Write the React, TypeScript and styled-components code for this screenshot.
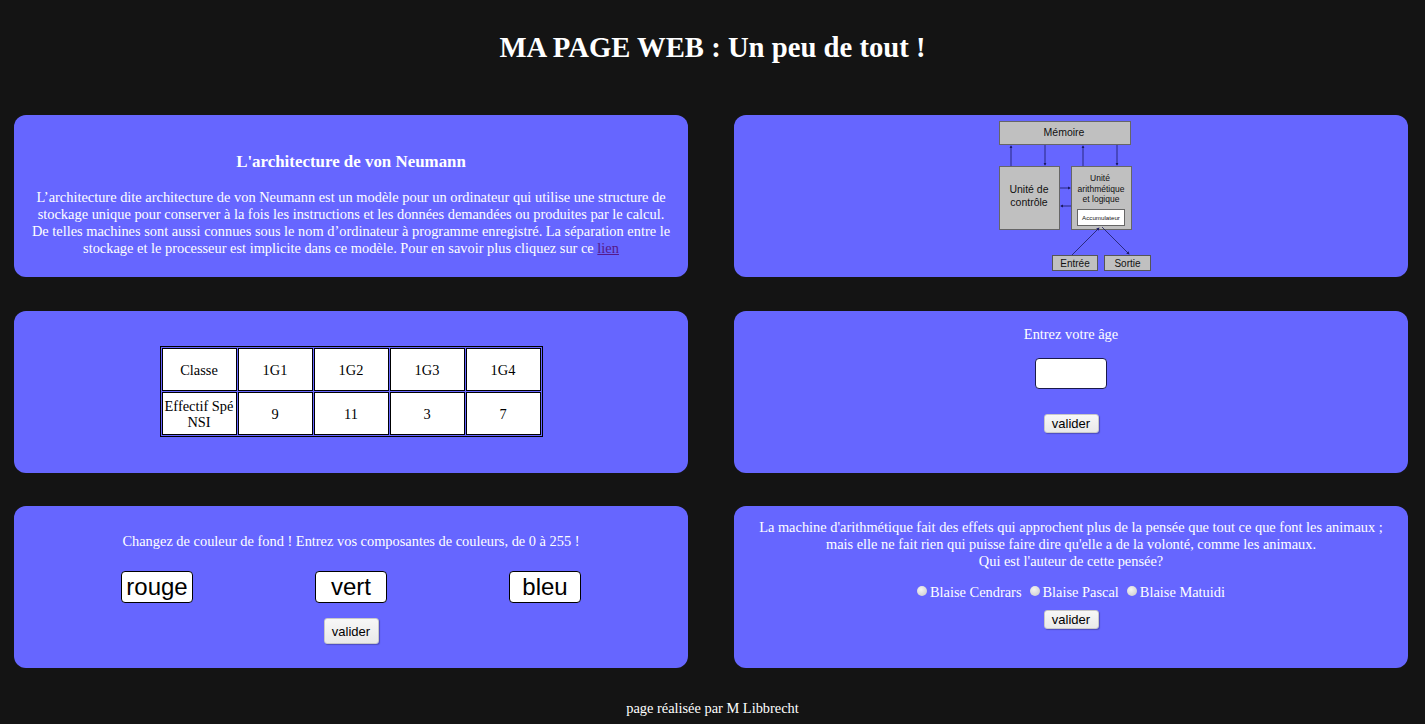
import React from "react";
import styled, { createGlobalStyle } from "styled-components";

const Global = createGlobalStyle`
  html, body { margin: 0; padding: 0; background: #141414; }
  body { font-family: "Liberation Serif", "Times New Roman", serif; color: #fff; }
`;

const Page = styled.div`
  width: 1425px;
  min-height: 724px;
  background: #141414;
`;

const Title = styled.h1`
  margin: 0;
  padding-top: 31px;
  font-size: 28.7px;
  line-height: 32px;
  font-weight: bold;
  text-align: center;
  color: #fff;
`;

const Grid = styled.main`
  display: grid;
  grid-template-columns: 674px 674px;
  grid-template-rows: 162px 162px 162px;
  column-gap: 46px;
  row-gap: 33.5px;
  margin: 52px 0 0 14px;
`;

const Card = styled.section<{ $center?: boolean; $top?: number }>`
  box-sizing: border-box;
  background: #6666ff;
  border-radius: 12px;
  display: flex;
  flex-direction: column;
  align-items: center;
  justify-content: ${(p) => (p.$center ? "center" : "flex-start")};
  padding: ${(p) => (p.$top ?? 0)}px 14px 0;
  text-align: center;
  font-size: 14.4px;
  line-height: 17px;
  color: #fff;
`;

const CardHeading = styled.h3`
  margin: 0 0 18px;
  font-size: 16.9px;
  line-height: 18px;
  font-weight: bold;
`;

const Para = styled.p`
  margin: 0;
`;

const Link = styled.a`
  color: #551a8b;
  text-decoration: underline;
`;

const Table = styled.table`
  border: 1px solid #000;
  border-spacing: 1px;
  background: #6666ff;
  font-size: 14.4px;
  line-height: 16px;
  color: #000;
`;

const Cell = styled.td`
  width: 73px;
  height: 41px;
  padding: 0;
  border: 1px solid #000;
  background: #fff;
  text-align: center;
  vertical-align: middle;
`;

const Label = styled.div<{ $gap?: number }>`
  margin-bottom: ${(p) => p.$gap ?? 0}px;
`;

const AgeInput = styled.input`
  box-sizing: border-box;
  width: 72px;
  height: 31px;
  border: 1px solid #1a1a4a;
  border-radius: 4px;
  background: #fff;
  margin-bottom: 25px;
  outline: none;
`;

const Button = styled.button<{ $tall?: boolean }>`
  box-sizing: border-box;
  width: 55px;
  height: ${(p) => (p.$tall ? 26 : 19)}px;
  padding: 0;
  font-family: Arial, "Liberation Sans", sans-serif;
  font-size: 13px;
  color: #000;
  background: linear-gradient(#f7f7f7, #e9e9e9);
  border: 1px solid #c8c8c8;
  border-radius: 3px;
  box-shadow: 1px 1px 1px rgba(0, 0, 0, 0.25);
`;

const ColorRow = styled.div`
  display: flex;
  justify-content: center;
  gap: 122px;
  margin-bottom: 15px;
`;

const ColorInput = styled.input`
  box-sizing: border-box;
  width: 72px;
  height: 32px;
  padding: 0 1px;
  border: 1px solid #000;
  border-radius: 4px;
  background: #fff;
  font-family: Arial, "Liberation Sans", sans-serif;
  font-size: 24px;
  color: #000;
  text-align: center;
  outline: none;
`;

const Quote = styled.div`
  margin-bottom: 14px;
`;

const RadioRow = styled.div`
  display: flex;
  align-items: center;
  justify-content: center;
  gap: 8px;
  margin-bottom: 9px;
  line-height: 17px;
`;

const RadioLabel = styled.label`
  display: inline-flex;
  align-items: center;
  gap: 3px;
`;

const Radio = styled.input`
  appearance: none;
  width: 10px;
  height: 10px;
  margin: 0;
  border-radius: 50%;
  background: radial-gradient(circle at 40% 35%, #f4f4f4, #c9c9c9);
  border: none;
  transform: translateY(-2px);
`;

const Footer = styled.footer`
  margin-top: 32px;
  text-align: center;
  font-size: 14.4px;
  line-height: 16px;
  color: #fff;
`;

const Arrow = ({ x1, y1, x2, y2 }: { x1: number; y1: number; x2: number; y2: number }) => (
  <line x1={x1} y1={y1} x2={x2} y2={y2} stroke="#1a1a60" strokeWidth={0.8} markerEnd="url(#ah)" />
);

const Diagram = () => (
  <svg width="166" height="156" viewBox="-6 0 166 156">
    <defs>
      <marker id="ah" markerWidth="4" markerHeight="4" refX="3" refY="2" orient="auto">
        <path d="M0,0 L4,2 L0,4 z" fill="#1a1a60" />
      </marker>
    </defs>
    <g fontFamily="Arial, 'Liberation Sans', sans-serif" fill="#111" textAnchor="middle">
      <rect x="5.5" y="3.5" width="131" height="23" fill="#c0c0c0" stroke="#666" />
      <text x="70" y="18" fontSize="10.5">Mémoire</text>
      <rect x="5.5" y="48.5" width="60" height="63" fill="#c0c0c0" stroke="#666" />
      <text x="35" y="75" fontSize="10.5">Unité de</text>
      <text x="35" y="88" fontSize="10.5">contrôle</text>
      <rect x="77.5" y="48.5" width="60" height="63" fill="#c0c0c0" stroke="#666" />
      <text x="106" y="63" fontSize="8.5">Unité</text>
      <text x="107" y="74" fontSize="8.5">arithmétique</text>
      <text x="107" y="84" fontSize="8.5">et logique</text>
      <rect x="83.5" y="91.5" width="47" height="16" fill="#fff" stroke="#666" />
      <text x="107" y="102" fontSize="6.2">Accumulateur</text>
      <rect x="58.5" y="137.5" width="45" height="15" fill="#c0c0c0" stroke="#555" />
      <text x="81" y="148.5" fontSize="10">Entrée</text>
      <rect x="110.5" y="137.5" width="46" height="15" fill="#c0c0c0" stroke="#555" />
      <text x="133.5" y="148.5" fontSize="10">Sortie</text>
    </g>
    <Arrow x1={17} y1={48} x2={17} y2={28} />
    <Arrow x1={51} y1={27} x2={51} y2={47} />
    <Arrow x1={89} y1={48} x2={89} y2={28} />
    <Arrow x1={123} y1={27} x2={123} y2={47} />
    <Arrow x1={66} y1={70} x2={76} y2={70} />
    <Arrow x1={77} y1={88} x2={67} y2={88} />
    <Arrow x1={78} y1={137} x2={105} y2={110} />
    <Arrow x1={108} y1={109} x2={135} y2={136} />
  </svg>
);

export default function App() {
  return (
    <Page>
      <Global />
      <Title>MA PAGE WEB : Un peu de tout !</Title>
      <Grid>
        <Card $top={38}>
          <CardHeading>L'architecture de von Neumann</CardHeading>
          <Para>
            L’architecture dite architecture de von Neumann est un modèle pour un ordinateur qui utilise une structure de
            stockage unique pour conserver à la fois les instructions et les données demandées ou produites par le calcul.
            De telles machines sont aussi connues sous le nom d’ordinateur à programme enregistré. La séparation entre le
            stockage et le processeur est implicite dans ce modèle. Pour en savoir plus cliquez sur ce <Link href="#">lien</Link>
          </Para>
        </Card>
        <Card $center>
          <Diagram />
        </Card>
        <Card $center>
          <Table>
            <tbody>
              <tr>
                <Cell>Classe</Cell>
                <Cell>1G1</Cell>
                <Cell>1G2</Cell>
                <Cell>1G3</Cell>
                <Cell>1G4</Cell>
              </tr>
              <tr>
                <Cell>Effectif Spé NSI</Cell>
                <Cell>9</Cell>
                <Cell>11</Cell>
                <Cell>3</Cell>
                <Cell>7</Cell>
              </tr>
            </tbody>
          </Table>
        </Card>
        <Card $top={15}>
          <Label $gap={15}>Entrez votre âge</Label>
          <AgeInput type="text" />
          <Button>valider</Button>
        </Card>
        <Card $top={27}>
          <Label $gap={21}>Changez de couleur de fond ! Entrez vos composantes de couleurs, de 0 à 255 !</Label>
          <ColorRow>
            <ColorInput defaultValue="rouge" />
            <ColorInput defaultValue="vert" />
            <ColorInput defaultValue="bleu" />
          </ColorRow>
          <Button $tall>valider</Button>
        </Card>
        <Card $top={13}>
          <Quote>
            La machine d'arithmétique fait des effets qui approchent plus de la pensée que tout ce que font les animaux ;
            <br />
            mais elle ne fait rien qui puisse faire dire qu'elle a de la volonté, comme les animaux.
            <br />
            Qui est l'auteur de cette pensée?
          </Quote>
          <RadioRow>
            <RadioLabel>
              <Radio type="radio" name="auteur" />
              Blaise Cendrars
            </RadioLabel>
            <RadioLabel>
              <Radio type="radio" name="auteur" />
              Blaise Pascal
            </RadioLabel>
            <RadioLabel>
              <Radio type="radio" name="auteur" />
              Blaise Matuidi
            </RadioLabel>
          </RadioRow>
          <Button>valider</Button>
        </Card>
      </Grid>
      <Footer>page réalisée par M Libbrecht</Footer>
    </Page>
  );
}
